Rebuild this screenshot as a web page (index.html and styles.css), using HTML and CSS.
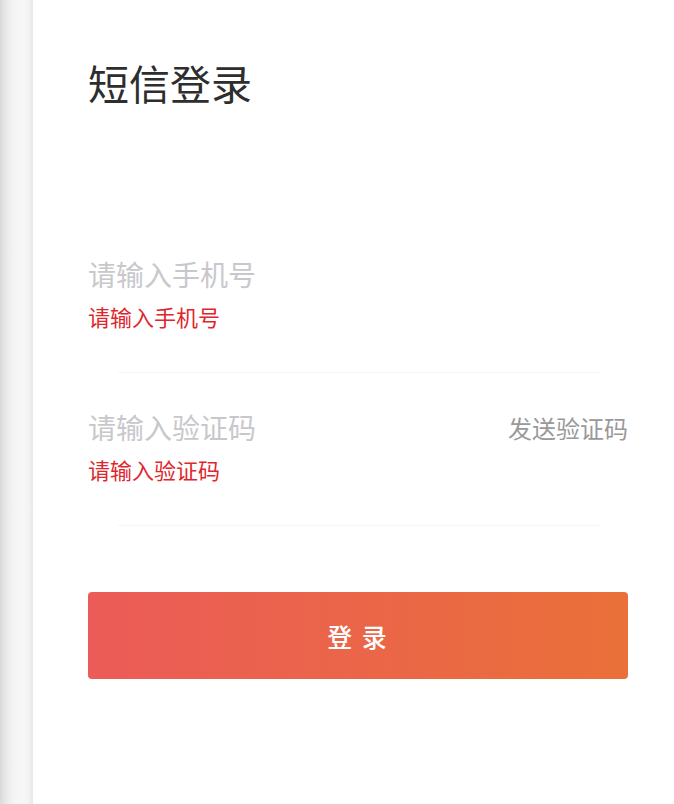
FILE: index.html
```html
<!DOCTYPE html>
<html lang="zh-CN">
<head>
    <meta charset="UTF-8">
    <meta name="viewport" content="width=device-width, initial-scale=1.0">
    <title>短信登录</title>
    <link rel="stylesheet" href="styles.css">
</head>
<body>
    <div class="page">
        <!-- Edge of the page underneath -->
        <div class="edge"></div>

        <div class="panel">
            <h1 class="title">短信登录</h1>

            <form class="login-form">
                <div class="field field-phone">
                    <div class="row">
                        <input type="tel" class="input" placeholder="请输入手机号">
                    </div>
                    <p class="error">请输入手机号</p>
                    <div class="line"></div>
                </div>

                <div class="field field-code">
                    <div class="row">
                        <input type="text" class="input" placeholder="请输入验证码">
                        <span class="send-code">发送验证码</span>
                    </div>
                    <p class="error">请输入验证码</p>
                    <div class="line"></div>
                </div>

                <button type="submit" class="btn">登 录</button>
            </form>
        </div>
    </div>
</body>
</html>
```

FILE: styles.css
```css
:root {
    --text-color: #2e2e2e;
    --placeholder-color: #c8c8cc;
    --error-color: #e0262c;
    --muted-color: #999;
    --line-color: #f6f6f6;
}

* {
    box-sizing: border-box;
}

body {
    margin: 0;
    font-family: "Noto Sans CJK SC", "Noto Sans", sans-serif;
    background-color: #fff;
    color: var(--text-color);
}

.page {
    display: flex;
    min-height: 804px;
}

.edge {
    width: 33px;
    flex-shrink: 0;
    background: linear-gradient(to right, #d9d9d9 0, #e4e4e4 4px, #ececec 8px, #f4f4f4 14px, #f7f7f7 22px, #f3f3f3 29px, #e8e8e8 32px, #ededed 33px);
}

.panel {
    flex: 1;
    padding: 58px 46px 0 55px;
}

.title {
    margin: 0;
    font-size: 41px;
    line-height: 48px;
    font-weight: 400;
    color: var(--text-color);
}

.login-form {
    display: flex;
    flex-direction: column;
}

.field-phone {
    padding-top: 148px;
}

.field-code {
    padding-top: 34px;
}

.row {
    display: flex;
    align-items: center;
    height: 40px;
}

.input {
    flex: 1;
    min-width: 0;
    border: none;
    outline: none;
    padding: 0;
    font-family: inherit;
    font-size: 28px;
    color: var(--text-color);
    background: transparent;
}

.input::placeholder {
    color: var(--placeholder-color);
}

.send-code {
    font-size: 24px;
    color: var(--muted-color);
    white-space: nowrap;
}

.error {
    margin: 7px 0 0;
    font-size: 22px;
    line-height: 30px;
    color: var(--error-color);
}

.line {
    height: 1px;
    margin: 41px 28px 0 30px;
    background-color: var(--line-color);
}

.btn {
    margin-top: 66px;
    height: 87px;
    border: none;
    border-radius: 4px;
    background: linear-gradient(to right, #eb5b58, #ea7039);
    color: #fff;
    font-family: inherit;
    font-size: 25px;
    font-weight: 500;
    letter-spacing: 2px;
    cursor: pointer;
}
```
